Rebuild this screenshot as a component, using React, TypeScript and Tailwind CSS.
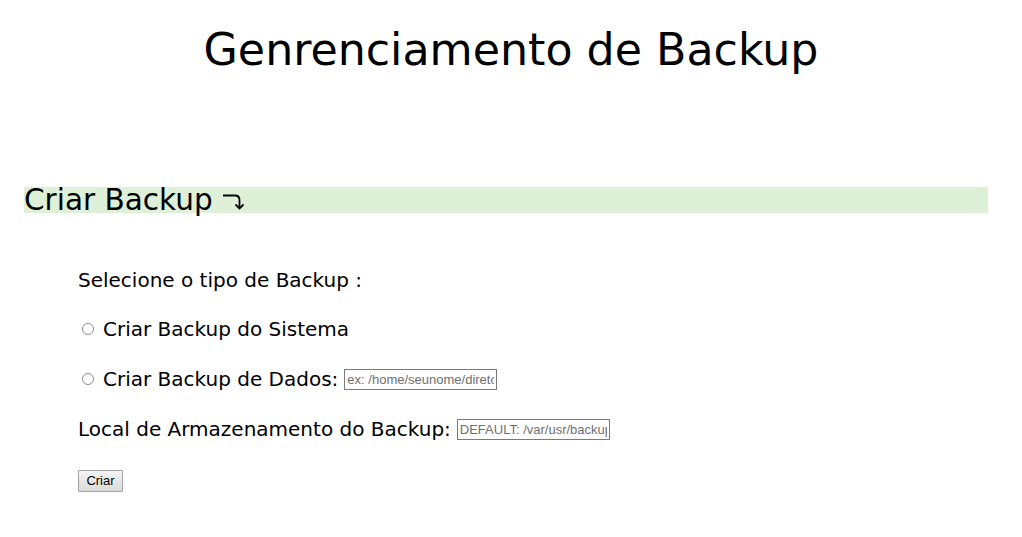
import React from 'react';

const face = "font-['DejaVu_Sans','Liberation_Sans',sans-serif]";
const control = "font-['Liberation_Sans',Arial,sans-serif]";

function Radio() {
  return <span className="inline-block w-[12px] h-[12px] rounded-full border border-[#8c8c8c] bg-white mr-[9px] shrink-0" />;
}

function PathInput({placeholder}: {placeholder: string}) {
  return (
    <input
      type="text"
      placeholder={placeholder}
      className={`${control} ml-[6px] w-[153px] h-[21px] border border-[#7a7a7a] bg-white px-[2px] text-[13px] text-black placeholder:text-[#6f6f6f] outline-none`}
    />
  );
}

// seta "vira para baixo" ao lado do título da seção
function TurnDown() {
  return (
    <svg width="22" height="16" viewBox="0 0 22 16" className="ml-[10px] mt-[4px]" fill="none" stroke="black" strokeWidth="1.8">
      <path d="M0 1.5 H12 Q16.5 1.5 16.5 6 V14" />
      <path d="M12.5 10.5 L16.5 14.5 L20.5 10.5" />
    </svg>
  );
}

export default function App() {
  return (
    <div className={`${face} min-h-[537px] bg-white text-black`}>
      <h1 className="pt-[22px] h-[62px] text-center text-[44.3px] leading-[56px] font-normal">
        Genrenciamento de Backup
      </h1>

      <div className="mt-[125px] ml-[24px] w-[964px] h-[26px] bg-[#dff0d8] flex items-center">
        <h2 className="text-[29.5px] leading-[26px] font-normal">Criar Backup</h2>
        <TurnDown />
      </div>

      <div className="ml-[78px] mt-[55px] flex flex-col text-[20px]">
        <div className="h-[24px] flex items-center">Selecione o tipo de Backup :</div>
        <label className="mt-[25px] h-[24px] flex items-center pl-[4px]">
          <Radio />
          Criar Backup do Sistema
        </label>
        <label className="mt-[26px] h-[24px] flex items-center pl-[4px]">
          <Radio />
          Criar Backup de Dados:
          <PathInput placeholder="ex: /home/seunome/diretorio" />
        </label>
        <div className="mt-[26px] h-[24px] flex items-center">
          Local de Armazenamento do Backup:
          <PathInput placeholder="DEFAULT: /var/usr/backup" />
        </div>
        <div className="mt-[22px]">
          <button
            type="button"
            className={`${control} h-[22px] w-[45px] border border-[#a3a3a3] rounded-[1px] bg-gradient-to-b from-[#f4f4f4] to-[#dadada] text-[13px] text-black leading-none`}
          >
            Criar
          </button>
        </div>
      </div>
    </div>
  );
}
